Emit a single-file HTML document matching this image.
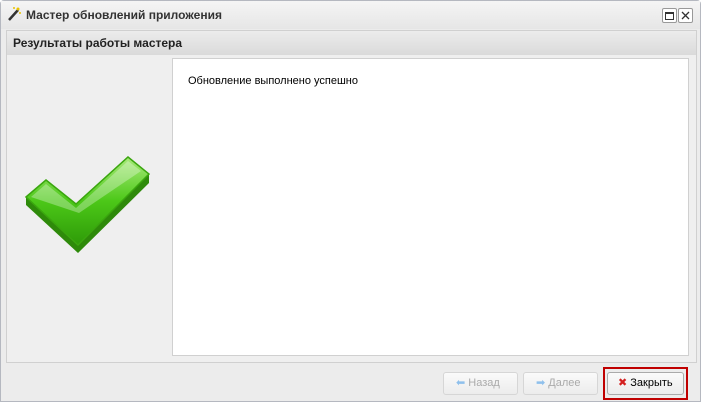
<!DOCTYPE html>
<html><head><meta charset="utf-8"><style>
body{margin:0;width:701px;height:401px;overflow:hidden;background:#fff;font-family:"Liberation Sans","DejaVu Sans",sans-serif;}
.win{position:absolute;left:0;top:0;width:699px;height:400px;border:1px solid #b5b8c0;border-radius:4px 4px 0 0;background:#ececec;}
.title{position:absolute;left:0;top:0;width:699px;height:28px;background:linear-gradient(#f5f5f5,#e6e6e6);}
.title span{position:absolute;left:25px;top:7px;font-size:12px;font-weight:bold;color:#333;}
.hdr{position:absolute;left:5px;top:29px;width:689px;height:24px;border:1px solid #d0d0d0;background:linear-gradient(#ececec,#dadada);}
.hdr span{position:absolute;left:6px;top:5px;font-size:12px;font-weight:bold;color:#222;}
.body{position:absolute;left:5px;top:54px;width:689px;height:307px;border:1px solid #d0d0d0;border-top:none;background:#efefef;}
.content{position:absolute;left:171px;top:57px;width:515px;height:296px;background:#fff;border:1px solid #d0d0d0;}
.content span{position:absolute;left:15px;top:16px;font-size:11px;color:#000;}
.btn{position:absolute;top:371px;height:21px;border:1px solid #d6d6d6;border-radius:3px;background:linear-gradient(#fafafa,#ececec);font-size:11px;color:#aaa;line-height:21px;}
.tb{position:absolute;top:7px;width:13px;height:13px;border:1px solid #999;border-radius:2px;background:#fff;}
</style></head><body>
<div class="win">
<div class="title">
<svg style="position:absolute;left:5px;top:5px" width="16" height="16"><line x1="3" y1="14" x2="12" y2="4" stroke="#333" stroke-width="2.5"/><circle cx="12" cy="3" r="1.5" fill="#e8c200"/><circle cx="8" cy="2" r="1" fill="#e8c200"/><circle cx="14" cy="7" r="1" fill="#e8c200"/></svg>
<span>Мастер обновлений приложения</span>
<div class="tb" style="left:661px"><div style="position:absolute;left:2px;top:3px;width:7px;height:5px;border:1px solid #333;border-top-width:2px"></div></div>
<div class="tb" style="left:677px"><svg width="13" height="13"><path d="M3 3L10 10M10 3L3 10" stroke="#333" stroke-width="1.3"/></svg></div>
</div>
<div class="hdr"><span>Результаты работы мастера</span></div>
<div class="body"></div>
<svg style="position:absolute;left:0;top:0" width="170" height="300">
<defs><linearGradient id="g" x1="0" y1="0" x2="0" y2="1"><stop offset="0" stop-color="#a8ea7a"/><stop offset="0.5" stop-color="#4cc818"/><stop offset="1" stop-color="#2e9a08"/></linearGradient></defs>
<polygon points="25,196 25,204 77,252 148,182 148,173 77,244" fill="#2e8a0a"/>
<polygon points="25,196 45,179 75,203 127,156 148,173 77,244" fill="url(#g)" stroke="#3aa60e" stroke-width="1.5"/>
<polygon points="30,196 45,183 75,207 127,160 140,170 78,212 60,206" fill="#fff" opacity="0.3"/>
</svg>
<div class="content"><span>Обновление выполнено успешно</span></div>
<div class="btn" style="left:442px;width:73px"><span style="color:#8fc0ec;margin-left:12px">⬅</span> Назад</div>
<div class="btn" style="left:522px;width:73px"><span style="color:#8fc0ec;margin-left:12px">➡</span> Далее</div>
<div style="position:absolute;left:602px;top:366px;width:81px;height:29px;border:2px solid #c00000;"></div>
<div class="btn" style="left:606px;width:75px;color:#000;border-color:#aaa"><span style="color:#d42020;font-weight:bold;margin-left:10px">✖</span> Закрыть</div>
</div>
</body></html>
